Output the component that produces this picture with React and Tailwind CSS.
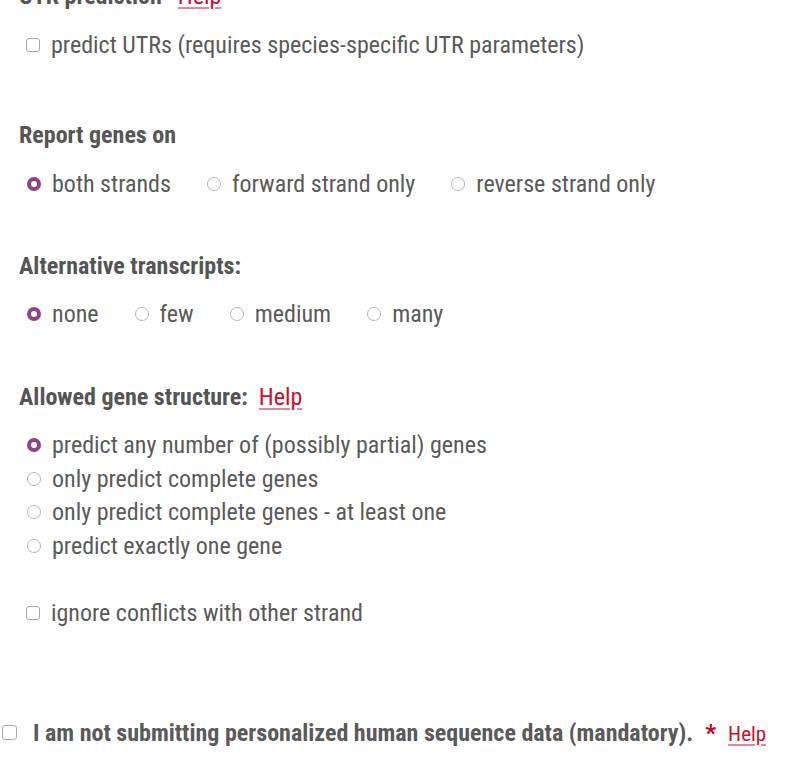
import React from "react";

const font = { fontFamily: '"Roboto", "Liberation Sans", sans-serif' };

function Radio({ checked }) {
  if (checked) {
    return <span className="inline-block w-[14px] h-[14px] rounded-full border-[4px] border-[#8e4585] bg-white shrink-0" />;
  }
  return <span className="inline-block w-[14px] h-[14px] rounded-full border border-[#b5b5b5] bg-white shrink-0" />;
}

function Box({ big }) {
  return (
    <span
      className={
        big
          ? "inline-block w-[15px] h-[15px] rounded-[3px] border border-[#a8a8a8] bg-white shrink-0"
          : "inline-block w-[14px] h-[14px] rounded-[3px] border border-[#a8a8a8] bg-white shrink-0"
      }
    />
  );
}

function Help({ small }) {
  return (
    <a
      href="#"
      className={
        small
          ? "text-[21px] text-[#c8102e] font-normal underline decoration-[#e08a95] underline-offset-[3px]"
          : "text-[#c8102e] font-normal underline decoration-[#e08a95] underline-offset-[3px]"
      }
    >
      Help
    </a>
  );
}

function Heading({ children }) {
  return <div className="h-[34px] flex items-center pl-[19px] font-bold text-[#555555]">{children}</div>;
}

function RadioRow({ items, checked }) {
  return (
    <div className="h-[34px] flex items-center pl-[27px] gap-[36px]">
      {items.map((t, i) => (
        <label key={t} className="flex items-center gap-[11px]">
          <Radio checked={i === checked} />
          <span>{t}</span>
        </label>
      ))}
    </div>
  );
}

export default function App() {
  const structure = [
    "predict any number of (possibly partial) genes",
    "only predict complete genes",
    "only predict complete genes - at least one",
    "predict exactly one gene",
  ];
  return (
    <div className="w-[786px] h-[769px] overflow-hidden bg-white text-[#5a5a5a] text-[24px] [font-stretch:75%]" style={font}>
      <div className="-mt-[21px]">
        <Heading>
          UTR prediction <span className="ml-[16px]"><Help /></span>
        </Heading>
        <div className="mt-[15px] h-[34px] flex items-center pl-[26px] gap-[11px]">
          <Box />
          <span>predict UTRs (requires species-specific UTR parameters)</span>
        </div>

        <div className="mt-[56px]">
          <Heading>Report genes on</Heading>
        </div>
        <div className="mt-[15px]">
          <RadioRow items={["both strands", "forward strand only", "reverse strand only"]} checked={0} />
        </div>

        <div className="mt-[48px]">
          <Heading>Alternative transcripts:</Heading>
        </div>
        <div className="mt-[14px]">
          <RadioRow items={["none", "few", "medium", "many"]} checked={0} />
        </div>

        <div className="mt-[49px]">
          <Heading>
            Allowed gene structure: <span className="ml-[11px]"><Help /></span>
          </Heading>
        </div>
        <div className="mt-[14px] flex flex-col pl-[27px]">
          {structure.map((t, i) => (
            <label key={t} className="h-[33.7px] flex items-center gap-[11px]">
              <Radio checked={i === 0} />
              <span>{t}</span>
            </label>
          ))}
        </div>

        <div className="mt-[33px] h-[34px] flex items-center pl-[26px] gap-[11px]">
          <Box />
          <span>ignore conflicts with other strand</span>
        </div>

        <div className="mt-[86px] h-[34px] flex items-center pl-[2px]">
          <Box big />
          <span className="ml-[16px] font-bold">I am not submitting personalized human sequence data (mandatory).</span>
          <span className="ml-[12px] text-[#d0021b] font-bold">*</span>
          <span className="ml-[12px]"><Help small /></span>
        </div>
      </div>
    </div>
  );
}
